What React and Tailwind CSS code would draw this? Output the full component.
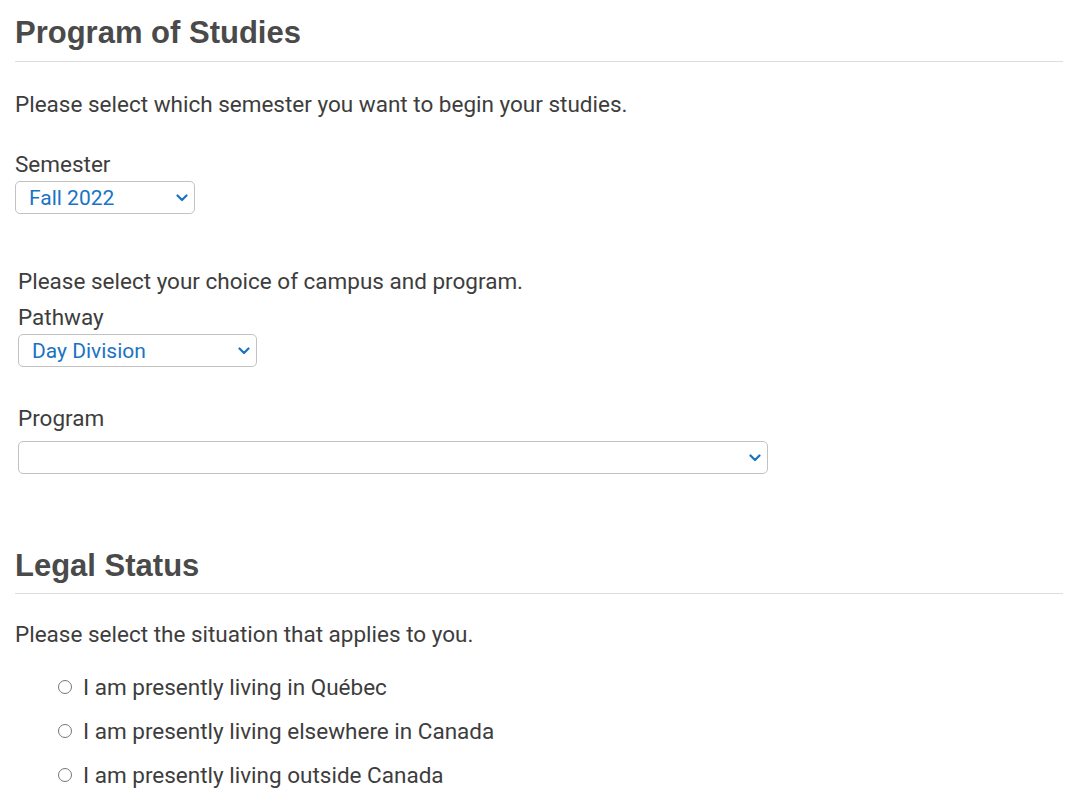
import React from "react";

const Chevron = () => (
  <svg width="12" height="8" viewBox="0 0 12 8" className="pointer-events-none">
    <path d="M1.5 1.5 L6 6 L10.5 1.5" fill="none" stroke="#1a73c4" strokeWidth="2.2" strokeLinecap="round" strokeLinejoin="round" />
  </svg>
);

const Select = ({ value, width, className = "" }) => (
  <div className={`relative ${width} ${className}`}>
    <select
      defaultValue={value}
      className="block w-full h-[33px] appearance-none rounded-[5px] border border-[#c2c2c2] bg-white pl-[13px] pr-8 text-[21px] text-[#1a73c4] outline-none"
    >
      <option value={value}>{value}</option>
    </select>
    <div className="absolute right-[7px] top-[13px]">
      <Chevron />
    </div>
  </div>
);

const Radio = ({ label }) => (
  <label className="flex items-center gap-[11px] h-[44px]">
    <span className="w-[14px] h-[14px] rounded-full border border-[#767676] bg-white" />
    <span className="leading-[30px]">{label}</span>
  </label>
);

export default function App() {
  return (
    <div className="min-h-screen bg-white px-[15px] text-[22.5px] text-[#3d3d3d] font-['Roboto',sans-serif] leading-[30px]">
      {/* Program of Studies */}
      <h2 className="pt-[15px] pb-[10px] border-b border-[#dedede] text-[31px] leading-[36px] font-bold text-[#4a4a4a] font-['Liberation_Sans',Arial,sans-serif]">
        Program of Studies
      </h2>
      <p className="mt-[27px]">Please select which semester you want to begin your studies.</p>

      <div className="mt-[29px] leading-[32px]">Semester</div>
      <Select value="Fall 2022" width="w-[180px]" className="mt-[1px]" />

      <div className="pl-[3px]">
        <p className="mt-[52px]">Please select your choice of campus and program.</p>
        <div className="mt-[6px]">Pathway</div>
        <Select value="Day Division" width="w-[239px]" className="mt-[2px]" />

        <div className="mt-[36px]">Program</div>
        <Select value="" width="w-[750px]" className="mt-[8px]" />
      </div>

      {/* Legal Status */}
      <h2 className="mt-[74px] pb-[9px] border-b border-[#dedede] text-[31px] leading-[36px] font-bold text-[#4a4a4a] font-['Liberation_Sans',Arial,sans-serif]">
        Legal Status
      </h2>
      <p className="mt-[25px]">Please select the situation that applies to you.</p>

      <div className="mt-[16px] pl-[43px]">
        <Radio label="I am presently living in Québec" />
        <Radio label="I am presently living elsewhere in Canada" />
        <Radio label="I am presently living outside Canada" />
      </div>
    </div>
  );
}
